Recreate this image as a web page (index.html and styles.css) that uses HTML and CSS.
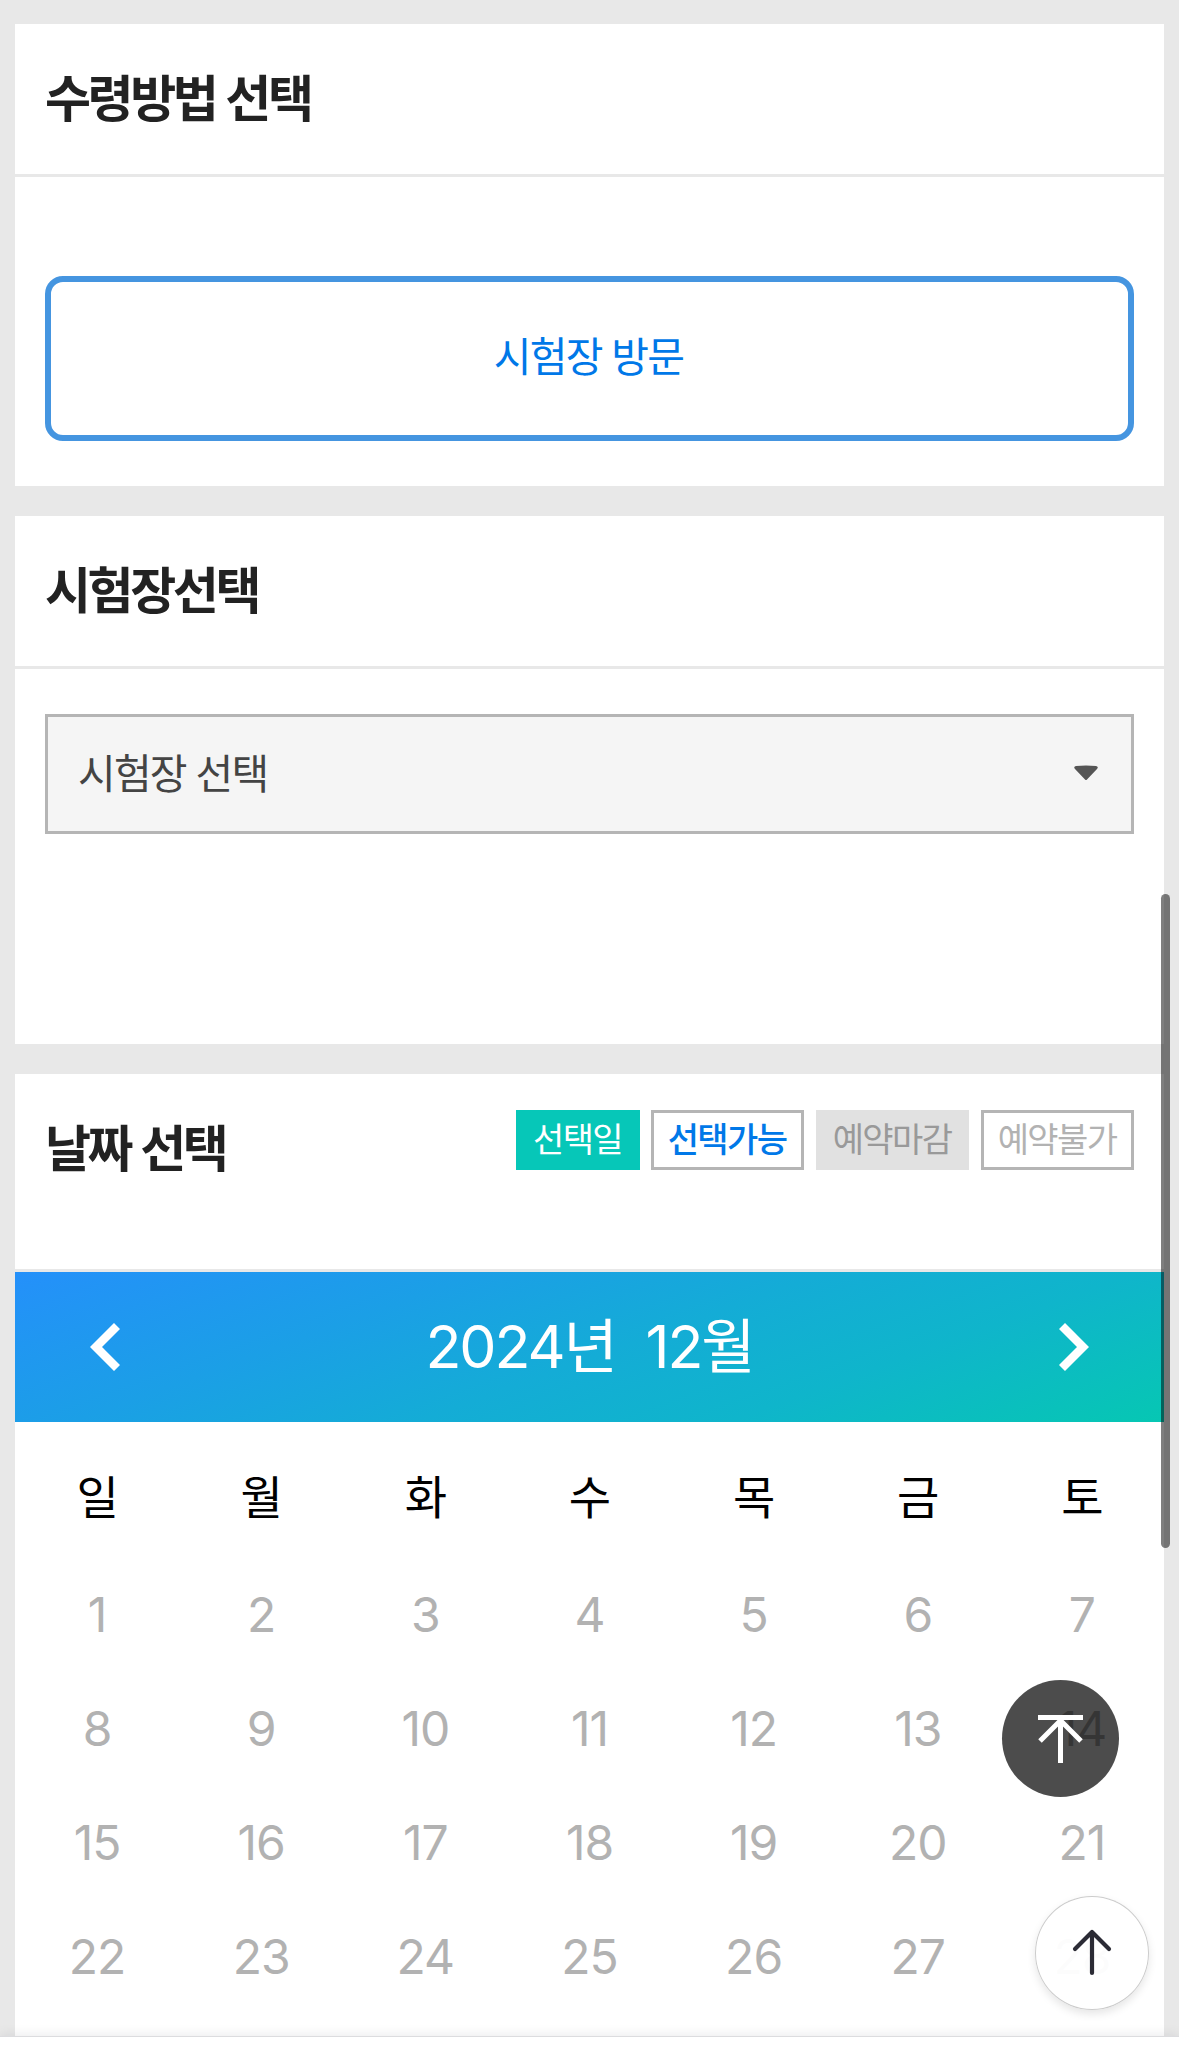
FILE: index.html
```
<!DOCTYPE html>
<html lang="ko">
<head>
    <meta charset="UTF-8">
    <title>시험장 예약</title>
    <link rel="stylesheet" href="styles.css">
</head>
<body>
<div class="card card_method">
    <h2 class="card_title">수령방법 선택</h2>
    <div class="card_body">
        <button class="btn_visit" type="button">시험장 방문</button>
    </div>
</div>
<div class="card card_place">
    <h2 class="card_title">시험장선택</h2>
    <div class="card_body">
        <div class="select_box">
            <span>시험장 선택</span>
            <svg class="caret" viewBox="0 0 26 16"><path d="M3 1Q13 0 23 1Q26 2 24 4L14 14.5Q13 15.5 12 14.5L2 4Q0 2 3 1Z" fill="#555"/></svg>
        </div>
    </div>
</div>
<div class="card card_date">
    <div class="date_head">
        <h2 class="date_title">날짜 선택</h2>
        <ul class="legend">
            <li class="selected">선택일</li>
            <li class="possible">선택가능</li>
            <li class="closed">예약마감</li>
            <li class="impossible">예약불가</li>
        </ul>
    </div>
    <div class="month_bar">
        <svg class="arrow" viewBox="0 0 30 48"><path d="M27 3L6 24L27 45" fill="none" stroke="#fff" stroke-width="8.5"/></svg>
        <div class="month"><span>2024년</span><span>12월</span></div>
        <svg class="arrow" viewBox="0 0 30 48"><path d="M3 3L24 24L3 45" fill="none" stroke="#fff" stroke-width="8.5"/></svg>
    </div>
    <div class="week">
        <span>일</span><span>월</span><span>화</span><span>수</span><span>목</span><span>금</span><span>토</span>
    </div>
    <div class="days">
        <span>1</span><span>2</span><span>3</span><span>4</span><span>5</span><span>6</span><span>7</span>
        <span>8</span><span>9</span><span>10</span><span>11</span><span>12</span><span>13</span><span>14</span>
        <span>15</span><span>16</span><span>17</span><span>18</span><span>19</span><span>20</span><span>21</span>
        <span>22</span><span>23</span><span>24</span><span>25</span><span>26</span><span>27</span><span>28</span>
    </div>
</div>
<div class="scrollbar"></div>
<a class="btn_top">
    <svg viewBox="0 0 117 117"><path d="M36 37.5H81M58.5 83V42M38 61L58.5 40.5L79 61" fill="none" stroke="#fff" stroke-width="5"/></svg>
</a>
<a class="btn_up">
    <svg viewBox="0 0 114 114"><path d="M57 77V36M40 53L57 36L74 53" fill="none" stroke="#2b2b35" stroke-width="4.2" stroke-linecap="round" stroke-linejoin="round"/></svg>
</a>
<div class="bottom_bar"></div>
</body>
</html>
```
FILE: styles.css
```
* {
    box-sizing: border-box;
}
body {
    margin: 0;
    padding: 24px 15px 0;
    height: 2055px;
    position: relative;
    overflow: hidden;
    background-color: #e8e8e8;
    font-family: Inter, "Noto Sans CJK KR", sans-serif;
    letter-spacing: -1px;
    color: #222;
}
.card {
    background-color: #fff;
    margin-bottom: 30px;
}
.card_method {
    height: 462px;
}
.card_place {
    height: 528px;
}
.card_date {
    height: 1000px;
}
.card_title, .date_title {
    margin: 0;
    font-size: 50px;
    font-weight: bold;
    line-height: 151px;
    letter-spacing: -3.4px;
    word-spacing: 1.5px;
}
.card_title {
    height: 153px;
    padding: 0 30px;
    border-bottom: 3px solid #e8e8e8;
}
.card_body {
    padding: 45px 30px;
}
.card_method .card_body {
    padding-top: 99px;
}
.btn_visit {
    display: block;
    width: 100%;
    height: 165px;
    padding: 0 2px 10px 0;
    border: 6px solid #4595e0;
    border-radius: 18px;
    background-color: #fff;
    font-family: inherit;
    font-size: 41px;
    letter-spacing: -1.8px;
    color: #0078e8;
}
.select_box {
    display: flex;
    justify-content: space-between;
    align-items: center;
    height: 120px;
    padding: 0 32px 2px 30px;
    border: 3px solid #b5b5b5;
    background-color: #f5f5f5;
    font-size: 41px;
    letter-spacing: -1.8px;
    color: #444;
}
.select_box span {
    padding-bottom: 4px;
}
.caret {
    width: 26px;
    height: 16px;
}
.date_head {
    display: flex;
    justify-content: space-between;
    height: 198px;
    padding: 0 30px;
    border-bottom: 3px solid #e8e8e8;
}
.legend {
    display: flex;
    gap: 12px;
    margin: 36px 0 0;
    padding: 0;
    list-style: none;
    font-size: 34px;
    letter-spacing: -1.6px;
}
.legend li {
    width: 153px;
    height: 60px;
    border: 3px solid #b5b5b5;
    padding-right: 1px;
    line-height: 53px;
    text-align: center;
}
.legend .selected {
    width: 124px;
    margin-right: -1px;
    border-color: #06c7b8;
    background-color: #06c7b8;
    color: #fff;
}
.legend .possible {
    font-weight: 500;
    color: #0078e8;
}
.legend .closed {
    border-color: #e1e1e1;
    background-color: #e1e1e1;
    color: #999;
}
.legend .impossible {
    color: #b2b2b2;
}
.month_bar {
    display: flex;
    justify-content: space-between;
    align-items: center;
    height: 150px;
    padding: 0 75px;
    background: linear-gradient(160deg, #2490fa, #1b9fe6 30%, #14acd6 52%, #0fb5cb 72%, #06c7b3);
    color: #fff;
}
.arrow {
    width: 30px;
    height: 48px;
}
.month {
    display: flex;
    gap: 30px;
    padding-bottom: 9px;
    font-size: 59px;
    letter-spacing: -2.1px;
}
.week, .days {
    display: grid;
    grid-template-columns: repeat(7, 1fr);
    text-align: center;
    font-size: 48px;
}
.week {
    height: 136px;
    line-height: 151px;
    font-size: 46px;
    color: #000;
}
.days {
    grid-auto-rows: 114px;
    line-height: 114px;
    color: #b2b2b2;
}
.scrollbar {
    position: absolute;
    top: 894px;
    right: 9px;
    width: 9px;
    height: 654px;
    border-radius: 5px;
    background-color: rgba(0, 0, 0, 0.5);
}
.btn_top, .btn_up {
    position: absolute;
    border-radius: 50%;
}
.btn_top {
    top: 1680px;
    right: 60px;
    width: 117px;
    height: 117px;
    background-color: rgba(0, 0, 0, 0.7);
}
.btn_up {
    top: 1896px;
    right: 30px;
    width: 114px;
    height: 114px;
    background-color: rgba(255, 255, 255, 0.96);
    box-shadow: inset 0 0 0 1px #ccc, 0 4px 8px rgba(0, 0, 0, 0.1);
}
.btn_top svg, .btn_up svg {
    display: block;
}
.bottom_bar {
    position: absolute;
    left: 0;
    bottom: 0;
    width: 100%;
    height: 19px;
    border-top: 1px solid #dcdcdf;
    background-color: #fff;
    box-shadow: 0 -2px 12px rgba(0, 10, 40, 0.08);
}
```
